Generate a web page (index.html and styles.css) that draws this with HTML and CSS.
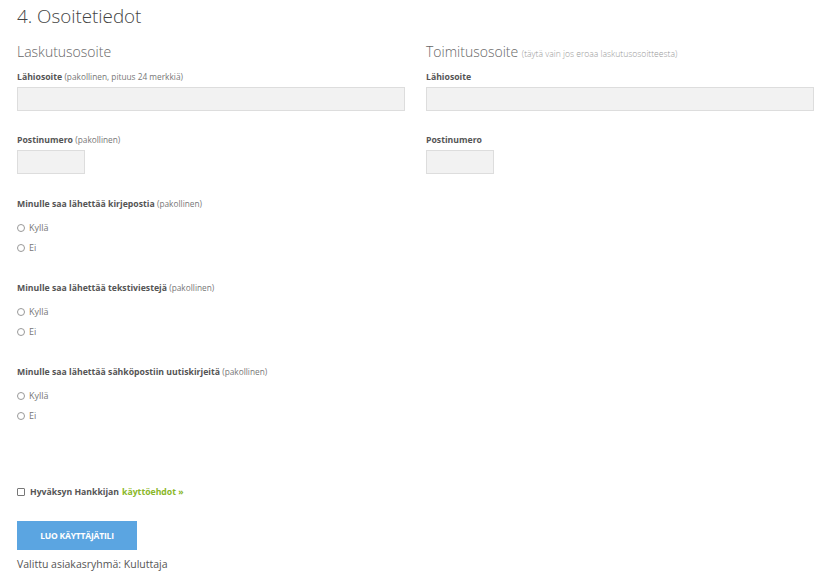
FILE: index.html
```html
<!DOCTYPE html>
<html lang="fi">
<head>
    <meta charset="UTF-8">
    <meta name="viewport" content="width=device-width, initial-scale=1.0">
    <title>Osoitetiedot</title>
    <link rel="stylesheet" href="styles.css">
</head>
<body>
    <h1 class="page-title">4. Osoitetiedot</h1>

    <div class="address-grid">
        <div class="address-col">
            <h2 class="col-title">Laskutusosoite</h2>
            <label class="field-label" for="street">Lähiosoite <span class="hint">(pakollinen, pituus 24 merkkiä)</span></label>
            <input class="text-input" type="text" id="street">
            <label class="field-label field-gap" for="zip">Postinumero <span class="hint">(pakollinen)</span></label>
            <input class="text-input zip-input" type="text" id="zip">
        </div>
        <div class="address-col">
            <h2 class="col-title">Toimitusosoite <span class="col-hint">(täytä vain jos eroaa laskutusosoitteesta)</span></h2>
            <label class="field-label" for="shipStreet">Lähiosoite</label>
            <input class="text-input" type="text" id="shipStreet">
            <label class="field-label field-gap" for="shipZip">Postinumero</label>
            <input class="text-input zip-input" type="text" id="shipZip">
        </div>
    </div>

    <div class="question">
        <div class="field-label">Minulle saa lähettää kirjepostia <span class="hint">(pakollinen)</span></div>
        <label class="radio-label"><input type="radio" name="post"> Kyllä</label>
        <label class="radio-label"><input type="radio" name="post"> Ei</label>
    </div>

    <div class="question">
        <div class="field-label">Minulle saa lähettää tekstiviestejä <span class="hint">(pakollinen)</span></div>
        <label class="radio-label"><input type="radio" name="sms"> Kyllä</label>
        <label class="radio-label"><input type="radio" name="sms"> Ei</label>
    </div>

    <div class="question">
        <div class="field-label">Minulle saa lähettää sähköpostiin uutiskirjeitä <span class="hint">(pakollinen)</span></div>
        <label class="radio-label"><input type="radio" name="news"> Kyllä</label>
        <label class="radio-label"><input type="radio" name="news"> Ei</label>
    </div>

    <label class="terms"><input type="checkbox" id="terms"> Hyväksyn Hankkijan <a href="#" class="terms-link">käyttöehdot »</a></label>

    <button class="submit-btn" type="button">Luo käyttäjätili</button>
    <p class="group-info">Valittu asiakasryhmä: Kuluttaja</p>
</body>
</html>
```

FILE: styles.css
```css
body {
    margin: 0;
    padding: 0 11px 0 17px;
    font-family: "Open Sans", Arial, sans-serif;
    color: #555;
    background: #fff;
}
.page-title {
    margin: 0;
    font-size: 18.8px;
    line-height: 32px;
    font-weight: 300;
    color: #444;
}
.address-grid {
    display: grid;
    grid-template-columns: 1fr 1fr;
    column-gap: 21px;
    margin-top: 10px;
}
.address-col {
    display: flex;
    flex-direction: column;
}
.col-title {
    margin: 0;
    height: 20px;
    font-size: 14px;
    line-height: 20px;
    font-weight: 300;
    color: #666;
}
.col-hint {
    font-size: 8.6px;
    line-height: 1;
    color: #999;
}
.field-label {
    display: block;
    margin-top: 8px;
    font-size: 8.7px;
    line-height: 14px;
    font-weight: bold;
    color: #555;
}
.field-gap {
    margin-top: 22px;
}
.hint {
    font-weight: normal;
    font-size: 8.3px;
    line-height: 1;
    color: #777;
}
.text-input {
    box-sizing: border-box;
    width: 100%;
    height: 24px;
    margin-top: 3px;
    border: 1px solid #ddd;
    background: #f2f2f2;
    padding: 0 6px;
}
.zip-input {
    width: 68px;
}
.question {
    margin-top: 23px;
}
.question .field-label {
    margin-top: 0;
    margin-bottom: 7px;
}
.radio-label {
    display: flex;
    align-items: center;
    font-size: 9px;
    line-height: 20px;
    color: #777;
}
.radio-label input {
    appearance: none;
    width: 8px;
    height: 8px;
    margin: 0 4px 0 0;
    border: 1px solid #999;
    border-radius: 50%;
    box-sizing: border-box;
}
.terms {
    display: flex;
    align-items: center;
    margin-top: 56px;
    font-size: 8.7px;
    line-height: 20px;
    font-weight: bold;
    color: #555;
}
.terms input {
    appearance: none;
    width: 8px;
    height: 8px;
    margin: 0 5px 0 0;
    border: 1px solid #777;
    border-radius: 1px;
    box-sizing: border-box;
}
.terms-link {
    margin-left: 3px;
    color: #8ab727;
    text-decoration: none;
}
.submit-btn {
    display: block;
    width: 120px;
    height: 29px;
    margin-top: 19px;
    border: none;
    background-color: #5ba5e1;
    color: #fff;
    font-family: "Open Sans", Arial, sans-serif;
    font-size: 8.5px;
    font-weight: bold;
    text-transform: uppercase;
    letter-spacing: -0.2px;
    cursor: pointer;
}
.group-info {
    margin: 6px 0 0;
    font-size: 10.5px;
    line-height: 16px;
    color: #555;
}
```
